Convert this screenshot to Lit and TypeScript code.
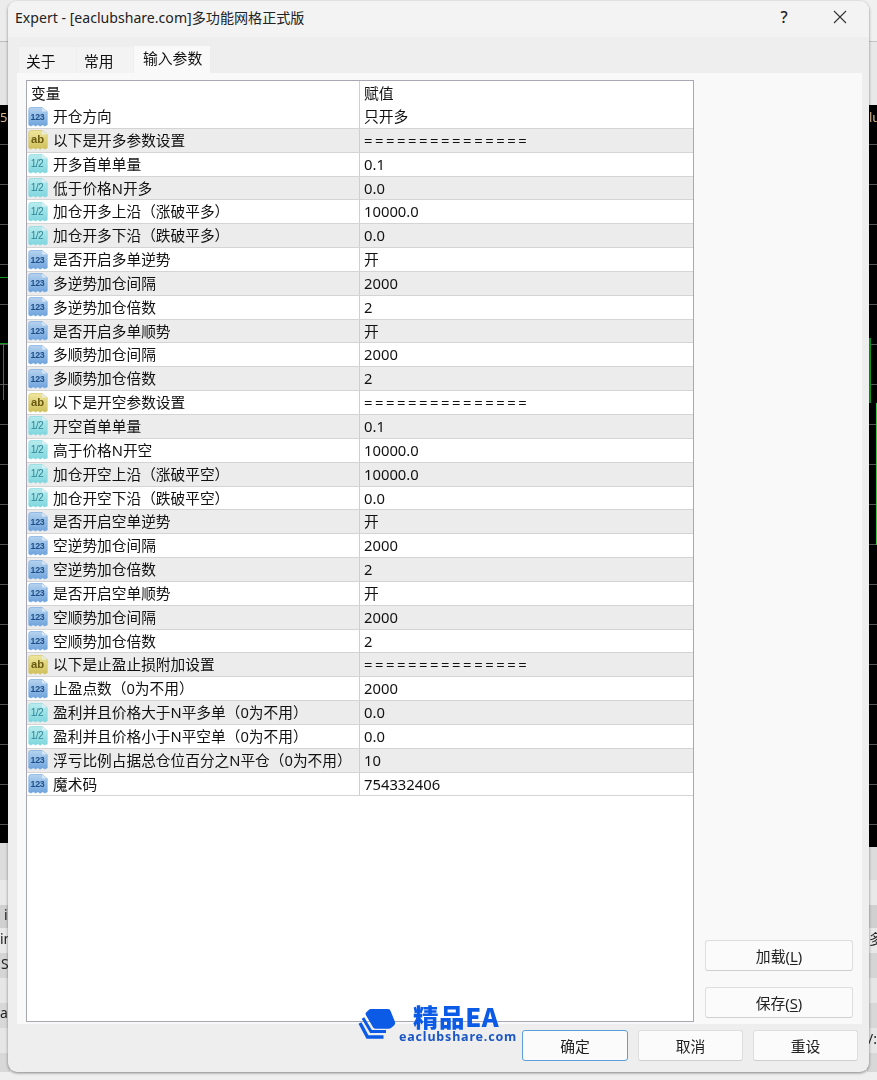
import { LitElement, html, css, svg } from "lit";
import { customElement } from "lit/decorators.js";

type Kind = "i" | "a" | "f";
const SEP = "===============";
const ROWS: [Kind, string, string][] = [
  ["i", "开仓方向", "只开多"],
  ["a", "以下是开多参数设置", SEP],
  ["f", "开多首单单量", "0.1"],
  ["f", "低于价格N开多", "0.0"],
  ["f", "加仓开多上沿（涨破平多）", "10000.0"],
  ["f", "加仓开多下沿（跌破平多）", "0.0"],
  ["i", "是否开启多单逆势", "开"],
  ["i", "多逆势加仓间隔", "2000"],
  ["i", "多逆势加仓倍数", "2"],
  ["i", "是否开启多单顺势", "开"],
  ["i", "多顺势加仓间隔", "2000"],
  ["i", "多顺势加仓倍数", "2"],
  ["a", "以下是开空参数设置", SEP],
  ["f", "开空首单单量", "0.1"],
  ["f", "高于价格N开空", "10000.0"],
  ["f", "加仓开空上沿（涨破平空）", "10000.0"],
  ["f", "加仓开空下沿（跌破平空）", "0.0"],
  ["i", "是否开启空单逆势", "开"],
  ["i", "空逆势加仓间隔", "2000"],
  ["i", "空逆势加仓倍数", "2"],
  ["i", "是否开启空单顺势", "开"],
  ["i", "空顺势加仓间隔", "2000"],
  ["i", "空顺势加仓倍数", "2"],
  ["a", "以下是止盈止损附加设置", SEP],
  ["i", "止盈点数（0为不用）", "2000"],
  ["f", "盈利并且价格大于N平多单（0为不用）", "0.0"],
  ["f", "盈利并且价格小于N平空单（0为不用）", "0.0"],
  ["i", "浮亏比例占据总仓位百分之N平仓（0为不用）", "10"],
  ["i", "魔术码", "754332406"],
];

const ICON = {
  i: { c1: "#b5d3ef", c2: "#6ea3dc", ink: "#1f4f88", label: "123", size: 8.6, x: 9.5, y: 13, ls: -0.2, w: 700 },
  a: { c1: "#efe69c", c2: "#cfc05a", ink: "#6a5a12", label: "ab", size: 11, x: 9.5, y: 13.5, ls: 0, w: 700 },
  f: { c1: "#b8ecee", c2: "#7ed6de", ink: "#2f8496", label: "1/2", size: 10, x: 9, y: 13.5, ls: -0.6, w: 400 },
};

function icon(kind: Kind) {
  const k = ICON[kind];
  return html`<svg class="ic" viewBox="0.5 0.5 19 19.5" width="20" height="20">
    ${svg`<defs><linearGradient id="g${kind}" x1="0" y1="0" x2="0" y2="1">
      <stop offset="0" stop-color=${k.c1}></stop><stop offset="1" stop-color=${k.c2}></stop></linearGradient></defs>
      <path d="M1 3q0-2 2-2h11l5 4v13l-2.500 1-2-1.200-2.500 1.400-2-1.400-2.500 1.200-2-1.200-2.500 1.200-2-1z" fill="url(#g${kind})" stroke=${k.c2} stroke-width=".6"></path>
      <path d="M14 1v4h5z" fill="#e8f2fa" opacity=".75"></path>
      <text x=${k.x} y=${k.y} text-anchor="middle" font-size=${k.size} letter-spacing=${k.ls} font-weight=${k.w} fill=${k.ink} font-family="Liberation Sans, sans-serif">${k.label}</text>`}
  </svg>`;
}

const LEFT: [number, string][] = [
  [41, "#ececec"], [1, "#bdbdbd"], [63, "#e4e4e4"], [738, "chart"], [37, "#dcdcdc"], [25, "#e9e9e9"], [23, "#d0d0d0"], [25, "#e9e9e9"], [25, "#d5d5d5"], [25, "#e6e6e6"], [25, "#d8d8d8"], [25, "#e6e6e6"], [27, "#d8d8d8"],
];
const RIGHT: [number, string][] = [
  [41, "#f0f0f0"], [1, "#c4c4c4"], [63, "#e8e8e8"], [742, "chart"], [33, "#dcdcdc"], [25, "#e9e9e9"], [23, "#d0d0d0"], [25, "#e9e9e9"], [25, "#d5d5d5"], [25, "#e6e6e6"], [25, "#d8d8d8"], [25, "#e6e6e6"], [27, "#d8d8d8"],
];

function strip(bands: [number, string][]) {
  return html`<div class="strip">
    ${bands.map(([h, c]) =>
      html`<div class=${c === "chart" ? "band chart" : "band"} style="height:${h}px;${c === "chart" ? "" : `background:${c}`}"></div>`
    )}
  </div>`;
}

@customElement("app-root")
export class AppRoot extends LitElement {
  static styles = css`
    :host {
      display: block;
      position: relative;
      width: 877px;
      height: 1080px;
      overflow: hidden;
      background: #efefef;
      font-family: "Noto Sans", "Noto Sans CJK SC", sans-serif;
      font-size: 14.8px;
      color: #111;
    }
    .stage {
      width: 877px;
      height: 1080px;
      filter: blur(0.35px);
      position: relative;
    }
    .back {
      display: flex;
      justify-content: space-between;
      height: 1072px;
      overflow: hidden;
    }
    .strip {
      width: 10px;
      display: flex;
      flex-direction: column;
    }
    .band {
      flex: none;
    }
    .chart {
      background-color: #000;
      background-image: repeating-linear-gradient(
        to bottom,
        transparent 0 39px,
        #555 39px 40px
      );
    }
    .dialog {
      position: absolute;
      left: 8px;
      top: 1px;
      width: 861px;
      height: 1071px;
      border-radius: 9px;
      background: #eeeeee;
      box-shadow: 0 1px 3px rgba(0, 0, 0, 0.45);
      display: flex;
      flex-direction: column;
      overflow: hidden;
    }
    .title {
      height: 36px;
      flex: none;
      background: #f3f3f3;
      display: flex;
      align-items: center;
      padding: 0 0 4px 7px;
      box-sizing: border-box;
      font-size: 14.1px;
      color: #222;
    }
    .title .t {
      flex: 1;
    }
    .q {
      width: 20px;
      text-align: center;
      font-size: 16px;
      margin-right: 39px;
      font-weight: 500;
    }
    .x {
      margin-right: 22px;
      display: block;
    }
    .tabs {
      height: 36px;
      flex: none;
      display: flex;
      align-items: flex-end;
      padding-left: 11px;
      gap: 1px;
    }
    .tab {
      height: 26px;
      width: 57px;
      padding-left: 7px;
      box-sizing: border-box;
      background: #f3f3f3;
      line-height: 29px;
    }
    .tab.b {
      width: 56px;
    }
    .tab.on {
      height: 27px;
      width: 76px;
      background: #f9f9f9;
      padding-left: 9px;
      line-height: 25px;
    }
    .panel {
      margin: 0 7px 0 9px;
      height: 951px;
      flex: none;
      box-sizing: border-box;
      background: #f9f9f9;
      padding: 7px 9px 2px;
      display: flex;
      gap: 11px;
    }
    .table {
      width: 668px;
      height: 942px;
      box-sizing: border-box;
      background: #fff;
      border: 1px solid #a8a8b4;
      flex: none;
    }
    .head,
    .row {
      display: grid;
      grid-template-columns: 332px 1fr;
    }
    .head {
      height: 24px;
      line-height: 24px;
    }
    .row {
      height: 23.857px;
      line-height: 23px;
      box-sizing: border-box;
      border-bottom: 1px solid #d4d4d4;
    }
    .row.alt {
      background: #ececec;
    }
    .c1 {
      display: flex;
      align-items: center;
      white-space: nowrap;
      overflow: hidden;
      font-size: 14.7px;
    }
    .head .c1 {
      padding-left: 4px;
    }
    .c2 {
      border-left: 1px solid #cfcfcf;
      padding-left: 4px;
    }
    .sep {
      letter-spacing: 2.55px;
    }
    .ic {
      flex: none;
      margin: 0 5px 0 1px;
    }
    .side {
      flex: 1;
      display: flex;
      flex-direction: column;
      justify-content: flex-end;
      gap: 16px;
      padding-bottom: 4px;
    }
    .btn {
      height: 31px;
      box-sizing: border-box;
      border: 1px solid #dedede;
      border-bottom-color: #cfcfcf;
      border-radius: 3px;
      background: #fbfbfb;
      display: flex;
      align-items: center;
      justify-content: center;
      color: #222;
    }
    .btn u {
      text-underline-offset: 2px;
    }
    .foot {
      flex: 1;
      display: flex;
      justify-content: flex-end;
      gap: 10px;
      padding: 6px 11px 0 0;
    }
    .foot .btn {
      width: 105px;
    }
    .foot .btn.def {
      width: 106px;
      border-color: #5c9fd6;
    }
    .logo {
      position: absolute;
      left: 356px;
      top: 1004px;
      width: 165px;
      height: 42px;
    }
    .mark {
      position: absolute;
      left: 0;
      top: 3px;
    }
    .brand {
      position: absolute;
      left: 57px;
      top: 0;
      font-size: 25.5px;
      line-height: 24px;
      font-weight: 800;
      color: #0b5be6;
      font-family: "Noto Sans CJK SC", "Noto Sans", sans-serif;
      letter-spacing: 0.6px;
      white-space: nowrap;
    }
    .url {
      position: absolute;
      left: 43px;
      top: 26px;
      font-size: 12.5px;
      line-height: 14px;
      font-weight: 700;
      color: #1a56c4;
      letter-spacing: 0.82px;
      white-space: nowrap;
    }
    .frag {
      position: absolute;
      font-size: 14px;
      line-height: 18px;
      color: #222;
    }
    .frag.w {
      color: #d9b98c;
      font-size: 13px;
    }
    .g {
      position: absolute;
      background: #0f9a1e;
    }
    .g.bright {
      background: #2fd23f;
    }
  `;

  render() {
    return html`<div class="stage">
      <div class="back">${strip(LEFT)}${strip(RIGHT)}</div>

      <div class="g" style="left:0;top:277px;width:8px;height:1px"></div>
      <div class="g" style="left:0;top:343px;width:8px;height:1px"></div>
      <div class="g" style="left:3px;top:343px;width:1px;height:57px"></div>
      <div class="g" style="left:869px;top:338px;width:2px;height:65px"></div>
      <div class="g bright" style="left:876px;top:403px;width:1px;height:142px"></div>
      <div class="frag w" style="left:0;top:108px">51</div>
      <div class="frag w" style="left:869px;top:108px">lu</div>
      <div class="frag" style="left:4px;top:906px">i</div>
      <div class="frag" style="left:0;top:930px">in</div>
      <div class="frag" style="left:1px;top:955px">S</div>
      <div class="frag" style="left:0;top:1004px">ax</div>
      <div class="frag" style="left:869px;top:930px">多</div>
      <div class="frag" style="left:868px;top:1030px">/:</div>

      <div class="dialog">
        <div class="title">
          <span class="t">Expert - [eaclubshare.com]多功能网格正式版</span>
          <span class="q">?</span>
          <svg class="x" width="14" height="14" viewBox="0 0 14 14">
            <path d="M1 1l12 12M13 1L1 13" stroke="#333" stroke-width="1.1" fill="none"></path>
          </svg>
        </div>
        <div class="tabs">
          <div class="tab">关于</div>
          <div class="tab b">常用</div>
          <div class="tab on">输入参数</div>
        </div>
        <div class="panel">
          <div class="table">
            <div class="head"><div class="c1">变量</div><div class="c2">赋值</div></div>
            ${ROWS.map(
              ([k, n, v], i) => html`<div class="row ${i % 2 ? "alt" : ""}">
                <div class="c1">${icon(k)}<span>${n}</span></div>
                <div class="c2 ${v === SEP ? "sep" : ""}">${v}</div>
              </div>`
            )}
          </div>
          <div class="side">
            <div class="btn">加载(<u>L</u>)</div>
            <div class="btn">保存(<u>S</u>)</div>
          </div>
        </div>
        <div class="foot">
          <div class="btn def">确定</div>
          <div class="btn">取消</div>
          <div class="btn">重设</div>
        </div>
      </div>

      <div class="logo">
        <svg class="mark" width="40" height="34" viewBox="356 1007 40 34">
          <path d="M370.500 1009h17.500q2 0 2.600 2l4.400 11q.6 2-1 3.500l-3 2.500q-1 .8-2.500.8h-12.500q-2 0-3-1.600l-7-12q-1-1.600.3-3l2.700-2.400q.8-.8 1.500-.8z" fill="#0b5be6"></path>
          <path d="M363 1018l8 13.500h15" fill="none" stroke="#0b5be6" stroke-width="3"></path>
          <path d="M360 1023l7.500 14h16" fill="none" stroke="#0b5be6" stroke-width="3.400"></path>
        </svg>
        <div class="brand">精品EA</div>
        <div class="url">eaclubshare.com</div>
      </div>
    </div>`;
  }
}
